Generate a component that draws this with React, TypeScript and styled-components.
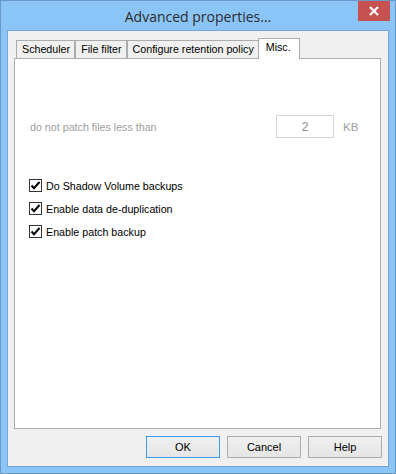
import React from "react";
import styled, { createGlobalStyle } from "styled-components";

const Global = createGlobalStyle`
  html, body { margin: 0; padding: 0; background: #ffffff; }
  * { box-sizing: border-box; }
`;

const Window = styled.div`
  width: 396px;
  height: 474px;
  background: #8bc4f6;
  border: 1px solid #6b99c6;
  display: flex;
  flex-direction: column;
  font-family: "Liberation Sans", Arial, sans-serif;
  font-size: 10.7px;
  color: #000;
`;

const TitleBar = styled.div`
  position: relative;
  height: 29px;
  display: flex;
  align-items: center;
  justify-content: center;
`;

const Title = styled.div`
  font-family: "Open Sans", "Noto Sans", sans-serif;
  font-size: 14px;
  color: #2b2b2b;
  margin-top: 1px;
`;

const CloseButton = styled.div`
  position: absolute;
  top: 0;
  right: 5px;
  width: 32px;
  height: 20px;
  background: #c75050;
  display: flex;
  align-items: center;
  justify-content: center;
`;

const Client = styled.div`
  flex: 1;
  margin: 0 6px 6px 6px;
  border: 1px solid #74a4d3;
  background: #f0f0f0;
  display: flex;
  flex-direction: column;
  padding: 7px 0 8px 0;
`;

const TabRow = styled.div`
  height: 20px;
  display: flex;
  align-items: flex-end;
  padding-left: 8px;
`;

const Tab = styled.div<{ $active?: boolean }>`
  position: relative;
  z-index: ${(p) => (p.$active ? 2 : 1)};
  height: ${(p) => (p.$active ? "21px" : "18px")};
  margin-bottom: ${(p) => (p.$active ? "-1px" : "0")};
  margin-left: ${(p) => (p.$active ? "-1px" : "0")};
  padding: ${(p) => (p.$active ? "2px 8px 0 7px" : "2px 4px 0 5px")};
  background: ${(p) => (p.$active ? "#ffffff" : "#f0f0f0")};
  border: 1px solid #acacac;
  border-bottom: none;
  line-height: 13px;
  white-space: nowrap;
`;

const Panel = styled.div`
  margin: 0 7px 0 6px;
  height: 371px;
  background: #ffffff;
  border: 1px solid #acacac;
  display: flex;
  flex-direction: column;
`;

const SizeRow = styled.div`
  margin-top: 56px;
  padding: 0 23px 0 15px;
  display: flex;
  align-items: center;
  color: #9e9e9e;
`;

const SizeLabel = styled.div`
  flex: 1;
`;

const SizeInput = styled.div`
  width: 58px;
  height: 23px;
  border: 1px solid #d5d5d5;
  background: #ffffff;
  display: flex;
  align-items: center;
  justify-content: center;
  font-size: 12px;
  color: #8c8c8c;
`;

const Unit = styled.div`
  margin-left: 9px;
  width: 14px;
  font-size: 11.5px;
`;

const CheckList = styled.div`
  margin-top: 41px;
  padding-left: 14px;
  display: flex;
  flex-direction: column;
  gap: 10.2px;
`;

const CheckRow = styled.div`
  display: flex;
  align-items: center;
  height: 13px;
  gap: 4px;
`;

const Box = styled.div`
  width: 13px;
  height: 13px;
  border: 1px solid #333333;
  background: #ffffff;
  display: flex;
  align-items: center;
  justify-content: center;
`;

const ButtonRow = styled.div`
  margin-top: 7px;
  padding-right: 6px;
  display: flex;
  justify-content: flex-end;
  gap: 7px;
`;

const Button = styled.div<{ $default?: boolean }>`
  width: 74px;
  height: 22px;
  border: 1px solid ${(p) => (p.$default ? "#3c9bf2" : "#acacac")};
  background: linear-gradient(#f0f0f0, #e5e5e5);
  display: flex;
  align-items: center;
  justify-content: center;
  font-size: 11px;
`;

const Check = () => (
  <svg width="11" height="11" viewBox="0 0 11 11">
    <path d="M1.5 5.5 L4 8.2 L9.5 2" fill="none" stroke="#000" strokeWidth="2" />
  </svg>
);

const CheckItem = ({ label }: { label: string }) => (
  <CheckRow>
    <Box>
      <Check />
    </Box>
    <span>{label}</span>
  </CheckRow>
);

export default function App() {
  return (
    <>
      <Global />
      <Window>
        <TitleBar>
          <Title>Advanced properties...</Title>
          <CloseButton>
            <svg width="10" height="10" viewBox="0 0 10 10">
              <path d="M1 1 L9 9 M9 1 L1 9" stroke="#fff" strokeWidth="2.2" />
            </svg>
          </CloseButton>
        </TitleBar>
        <Client>
          <TabRow>
            <Tab>Scheduler</Tab>
            <Tab>File filter</Tab>
            <Tab>Configure retention policy</Tab>
            <Tab $active>Misc.</Tab>
          </TabRow>
          <Panel>
            <SizeRow>
              <SizeLabel>do not patch files less than</SizeLabel>
              <SizeInput>2</SizeInput>
              <Unit>KB</Unit>
            </SizeRow>
            <CheckList>
              <CheckItem label="Do Shadow Volume backups" />
              <CheckItem label="Enable data de-duplication" />
              <CheckItem label="Enable patch backup" />
            </CheckList>
          </Panel>
          <ButtonRow>
            <Button $default>OK</Button>
            <Button>Cancel</Button>
            <Button>Help</Button>
          </ButtonRow>
        </Client>
      </Window>
    </>
  );
}
